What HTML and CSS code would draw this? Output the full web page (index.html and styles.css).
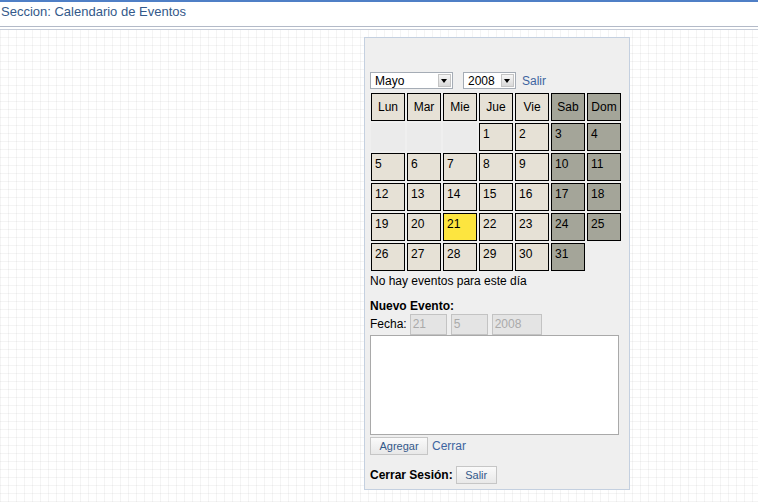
FILE: index.html
```html
<!DOCTYPE html>
<html>
<head>
<meta charset="utf-8">
<link rel="stylesheet" href="styles.css">
</head>
<body>
<div class="topbar"></div>
<div class="title">Seccion: Calendario de Eventos</div>
<div class="rule"></div>
<div class="panel">
  <div class="selects">
    <div class="sel sel-month"><span>Mayo</span><i class="arrow"></i></div>
    <div class="sel sel-year"><span>2008</span><i class="arrow"></i></div>
    <a class="link">Salir</a>
  </div>
  <table class="cal">
    <tr class="head"><th>Lun</th><th>Mar</th><th>Mie</th><th>Jue</th><th>Vie</th><th class="we">Sab</th><th class="we">Dom</th></tr>
    <tr><td class="empty"></td><td class="empty"></td><td class="empty"></td><td>1</td><td>2</td><td class="we">3</td><td class="we">4</td></tr>
    <tr><td>5</td><td>6</td><td>7</td><td>8</td><td>9</td><td class="we">10</td><td class="we">11</td></tr>
    <tr><td>12</td><td>13</td><td>14</td><td>15</td><td>16</td><td class="we">17</td><td class="we">18</td></tr>
    <tr><td>19</td><td>20</td><td class="today">21</td><td>22</td><td>23</td><td class="we">24</td><td class="we">25</td></tr>
    <tr><td>26</td><td>27</td><td>28</td><td>29</td><td>30</td><td class="we">31</td><td class="none"></td></tr>
  </table>
  <div class="noev">No hay eventos para este día</div>
  <div class="bold new">Nuevo Evento:</div>
  <div class="fecha">
    <span>Fecha:</span>
    <div class="inp w-d">21</div>
    <div class="inp w-m">5</div>
    <div class="inp w-y">2008</div>
  </div>
  <div class="area"></div>
  <div class="actions">
    <div class="btn b-add">Agregar</div>
    <a class="link">Cerrar</a>
  </div>
  <div class="session">
    <span class="bold">Cerrar Sesión:</span>
    <div class="btn b-out">Salir</div>
  </div>
</div>
</body>
</html>
```
FILE: styles.css
```css
html, body {
  margin: 0;
  padding: 0;
}
body {
  width: 758px;
  height: 502px;
  overflow: hidden;
  font-family: "Liberation Sans", Arial, sans-serif;
  font-size: 12px;
  color: #000;
  background-color: #fff;
  background-image:
    repeating-linear-gradient(90deg, rgba(0,0,0,0.045) 0 1px, transparent 1px 8px),
    repeating-linear-gradient(0deg, rgba(0,0,0,0.045) 0 1px, transparent 1px 8px);
}
.topbar {
  height: 2px;
  background: #4f7fc6;
}
.title {
  height: 24px;
  line-height: 19px;
  padding-left: 1px;
  font-size: 13px;
  color: #33598a;
  background: #fff;
}
.rule {
  height: 2px;
  border-top: 1px solid #b3bac8;
  border-bottom: 1px solid #c6ccd8;
  margin-bottom: 7px;
  background: #fff;
}
.panel {
  margin-left: 364px;
  box-sizing: border-box;
  width: 266px;
  height: 453px;
  border: 1px solid #c4d0e0;
  background: #efefef;
  padding: 34px 0 0 5px;
}
.selects {
  display: flex;
  align-items: center;
  height: 17px;
  margin-bottom: 2px;
}
.sel {
  box-sizing: border-box;
  height: 17px;
  background: #fff;
  border: 1px solid #a5acb5;
  display: flex;
  align-items: center;
  justify-content: space-between;
  padding: 0 1px 0 4px;
  font-size: 12px;
}
.sel-month { width: 83px; }
.sel-year { width: 53px; margin-left: 10px; }
.arrow {
  width: 13px;
  height: 13px;
  box-sizing: border-box;
  border: 1px solid #c4c4c4;
  background: linear-gradient(#f6f6f6, #d9d9d9);
  position: relative;
}
.arrow::after {
  content: "";
  position: absolute;
  left: 2px;
  top: 4px;
  border-left: 3.5px solid transparent;
  border-right: 3.5px solid transparent;
  border-top: 4px solid #000;
}
.link {
  color: #3d64a0;
  font-size: 12px;
  margin-left: 6px;
}
.cal {
  border-collapse: separate;
  border-spacing: 2px;
  margin-left: -1px;
}
.cal th, .cal td {
  box-sizing: border-box;
  width: 34px;
  height: 28px;
  padding: 0;
  border: 1px solid #000;
  background: #e6e1d6;
  font-weight: normal;
  font-size: 12px;
}
.cal th {
  text-align: center;
  vertical-align: middle;
}
.cal td {
  text-align: left;
  vertical-align: top;
  padding: 3px 0 0 3px;
}
.cal .we { background: #a4a599; }
.cal .today { background: #fde53f; }
.cal td.empty {
  border-color: transparent;
  background: #ebebeb;
}
.cal td.none {
  border-color: transparent;
  background: transparent;
}
.noev {
  margin-top: 1px;
  line-height: 14px;
}
.bold { font-weight: bold; }
.new {
  margin-top: 11px;
  line-height: 14px;
}
.fecha {
  display: flex;
  align-items: center;
  height: 22px;
}
.inp {
  box-sizing: border-box;
  height: 21px;
  border: 1px solid #c3c3c3;
  background: #e4e4e4;
  color: #aaa;
  padding: 2px 2px;
  margin-left: 4px;
}
.w-d { width: 37px; margin-left: 3px; }
.w-m { width: 37px; }
.w-y { width: 50px; }
.area {
  box-sizing: border-box;
  width: 249px;
  height: 100px;
  margin-top: 0;
  background: #fff;
  border: 1px solid #a9a9a9;
}
.actions {
  display: flex;
  align-items: center;
  margin-top: 2px;
}
.btn {
  box-sizing: border-box;
  height: 18px;
  border: 1px solid #c6c6c6;
  background: linear-gradient(#fafafa, #e8e8e8);
  color: #33598a;
  font-size: 11px;
  text-align: center;
  line-height: 16px;
}
.b-add { width: 58px; }
.actions .link { margin-left: 4px; }
.session {
  display: flex;
  align-items: center;
  margin-top: 11px;
}
.b-out { width: 41px; margin-left: 3px; }
```
